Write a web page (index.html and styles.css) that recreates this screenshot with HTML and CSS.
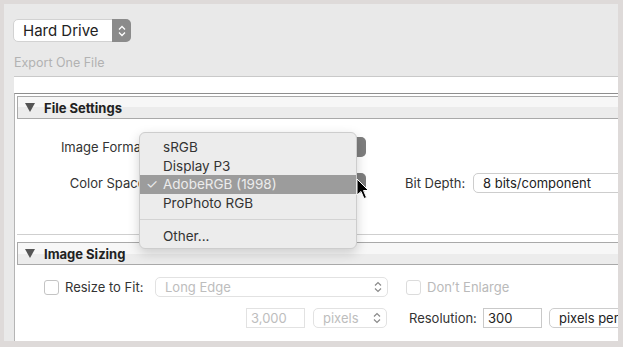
FILE: index.html
```html
<!DOCTYPE html>
<html lang="en">
<head>
    <meta charset="UTF-8">
    <meta name="viewport" content="width=device-width, initial-scale=1.0">
    <title>Export</title>
    <link rel="stylesheet" href="styles.css">
</head>
<body>

<div class="window">
    <div class="top">
        <div class="popup-main">
            <span class="popup-text">Hard Drive</span>
            <span class="stepper-dark">
                <svg width="10" height="14" viewBox="0 0 10 14"><path d="M2 5.5 L5 2.5 L8 5.5 M2 8.5 L5 11.5 L8 8.5" fill="none" stroke="#fff" stroke-width="1.3"/></svg>
            </span>
        </div>
        <div class="export-label">Export One File</div>
    </div>

    <div class="files-bar"></div>

    <div class="panel">
        <div class="section-head">
            <svg class="tri" width="10" height="9" viewBox="0 0 10 9"><polygon points="0,0 10,0 5,9" fill="#555"/></svg>
            <span>File Settings</span>
        </div>
        <div class="section-body file-body">
            <div class="row">
                <label class="field-label">Image Format:</label>
                <div class="popup"><span class="stepper-dark small"></span></div>
            </div>
            <div class="row row-gap">
                <label class="field-label">Color Space:</label>
                <div class="popup"><span class="stepper-dark small"></span></div>
                <label class="depth-label">Bit Depth:</label>
                <div class="select depth-select">8 bits/component</div>
            </div>
        </div>

        <div class="section-head second">
            <svg class="tri" width="10" height="9" viewBox="0 0 10 9"><polygon points="0,0 10,0 5,9" fill="#555"/></svg>
            <span>Image Sizing</span>
        </div>
        <div class="section-body sizing-body">
            <div class="row">
                <div class="check-group">
                    <span class="checkbox"></span>
                    <span class="check-text">Resize to Fit:</span>
                </div>
                <div class="select disabled long-edge">
                    Long Edge
                    <svg class="arrows" width="10" height="14" viewBox="0 0 10 14"><path d="M2 5.5 L5 2.5 L8 5.5 M2 8.5 L5 11.5 L8 8.5" fill="none" stroke="#8a8a8a" stroke-width="1.2"/></svg>
                </div>
                <span class="checkbox enlarge-box"></span>
                <span class="check-text disabled-text">Don’t Enlarge</span>
            </div>
            <div class="row row-two">
                <div class="input disabled size-input">3,000</div>
                <div class="select disabled units">
                    pixels
                    <svg class="arrows" width="10" height="14" viewBox="0 0 10 14"><path d="M2 5.5 L5 2.5 L8 5.5 M2 8.5 L5 11.5 L8 8.5" fill="none" stroke="#8a8a8a" stroke-width="1.2"/></svg>
                </div>
                <label class="res-label">Resolution:</label>
                <div class="input res-input">300</div>
                <div class="select res-units">pixels per inch</div>
            </div>
        </div>
    </div>

    <!-- open colour space menu -->
    <div class="menu">
        <div class="menu-item">sRGB</div>
        <div class="menu-item">Display P3</div>
        <div class="menu-item selected"><span class="check">✓</span>AdobeRGB (1998)</div>
        <div class="menu-item">ProPhoto RGB</div>
        <div class="menu-sep"></div>
        <div class="menu-item">Other...</div>
    </div>

    <svg class="cursor" width="14" height="22" viewBox="0 0 14 22">
        <path d="M1 1 L1 17 L5 13.5 L8 20.5 L10.5 19.5 L7.5 12.5 L12.5 12.5 Z" fill="#000" stroke="#fff" stroke-width="1"/>
    </svg>
</div>

</body>
</html>
```

FILE: styles.css
```css
body {
    margin: 0;
    background-color: #dedad9;
    font-family: Inter, "Helvetica Neue", Arial, sans-serif;
    font-size: 13px;
    color: #333;
}
.window {
    position: relative;
    margin: 4px 0 0 4px;
    width: 614px;
    height: 337px;
    background-color: #e9e9e9;
    overflow: hidden;
}
.top {
    padding: 15px 0 0 9px;
}
.popup-main {
    display: flex;
    align-items: stretch;
    width: 118px;
    height: 23px;
    box-sizing: border-box;
    background-color: #fff;
    border: 1px solid #d2d2d2;
    border-radius: 5px;
}
.popup-text {
    flex: 1;
    padding-left: 9px;
    font-size: 15px;
    line-height: 21px;
    color: #222;
}
.stepper-dark {
    display: flex;
    align-items: center;
    justify-content: center;
    width: 19px;
    margin: -1px -1px -1px 0;
    background-color: #8b8b8b;
    border-radius: 0 5px 5px 0;
}
.export-label {
    margin: 13px 0 0 1px;
    font-size: 12.5px;
    line-height: 15px;
    color: #b2b2b2;
}
.files-bar {
    height: 16px;
    margin: 6px 0 0 10px;
    background-color: #fff;
    border-top: 1px solid #c9c9c9;
}
.panel {
    margin-left: 10px;
    height: 250px;
    padding: 2px 0 0 2px;
    background-color: #fff;
    border-top: 1px solid #8e8e8e;
    border-left: 1px solid #b5b5b5;
}
.section-head {
    display: flex;
    align-items: center;
    height: 21px;
    padding-left: 7px;
    border: 1px solid #a9a9a9;
    border-right: none;
    background: linear-gradient(#f7f7f7 50%, #ececec 50%);
    font-weight: bold;
    font-size: 13px;
    color: #222;
}
.section-head .tri {
    margin-right: 9px;
}
.section-head.second {
    margin-top: 7px;
}
.section-body {
    padding-top: 18px;
}
.file-body {
    height: 97px;
    border-bottom: 1px solid #cfcfcf;
}
.row {
    display: flex;
    align-items: center;
    height: 20px;
}
.row > * {
    flex-shrink: 0;
    white-space: nowrap;
}
.row-gap {
    margin-top: 16px;
}
.field-label {
    width: 132px;
    text-align: right;
    color: #333;
}
.popup {
    display: flex;
    justify-content: flex-end;
    width: 209px;
    height: 18px;
    margin-left: 6px;
    background-color: #fff;
    border: 1px solid #cfcfcf;
    border-radius: 5px;
}
.stepper-dark.small {
    width: 17px;
    background-color: #7e7e7e;
}
.depth-label {
    width: 61px;
    margin-left: 39px;
}
.select {
    position: relative;
    height: 20px;
    box-sizing: border-box;
    padding-left: 9px;
    line-height: 18px;
    background-color: #fff;
    border: 1px solid #cdcdcd;
    border-radius: 5px;
    color: #222;
}
.depth-select {
    width: 160px;
    margin-left: 7px;
}
.select .arrows {
    position: absolute;
    right: 4px;
    top: 2px;
}
.select.disabled {
    border-color: #e2e2e2;
    color: #bdbdbd;
}
.sizing-body {
    padding-top: 12px;
}
.check-group {
    display: flex;
    align-items: center;
    width: 111px;
    margin-left: 27px;
}
.checkbox {
    width: 13px;
    height: 13px;
    border: 1px solid #c4c4c4;
    border-radius: 3px;
    background-color: #fff;
}
.check-text {
    margin-left: 6px;
    color: #333;
}
.long-edge {
    width: 233px;
}
.enlarge-box {
    margin-left: 18px;
    border-color: #dcdcdc;
}
.disabled-text {
    color: #bababa;
}
.row-two {
    margin-top: 11px;
}
.input {
    height: 20px;
    box-sizing: border-box;
    padding-left: 4px;
    line-height: 18px;
    background-color: #fff;
    border: 1px solid #c9c9c9;
    color: #222;
}
.input.disabled {
    border-color: #e2e2e2;
    color: #bdbdbd;
}
.size-input {
    width: 59px;
    margin-left: 229px;
}
.units {
    width: 74px;
    margin-left: 8px;
}
.res-label {
    width: 69px;
    margin-left: 22px;
}
.res-input {
    width: 59px;
    margin-left: 5px;
}
.res-units {
    width: 110px;
    margin-left: 7px;
}
.menu {
    position: absolute;
    left: 135px;
    top: 128px;
    width: 218px;
    height: 117px;
    box-sizing: border-box;
    padding-top: 5px;
    background-color: #ececec;
    border: 1px solid #cdcdcd;
    border-radius: 6px;
    box-shadow: 0 4px 12px rgba(0, 0, 0, 0.18);
    font-size: 13.5px;
}
.menu-item {
    position: relative;
    height: 18.5px;
    line-height: 18.5px;
    padding-left: 23px;
    color: #333;
}
.menu-item.selected {
    background-color: #9c9c9c;
    color: #ececec;
}
.menu-item .check {
    position: absolute;
    left: 6px;
}
.menu-sep {
    height: 1px;
    margin: 7px 0 7px;
    background-color: #d3d3d3;
}
.cursor {
    position: absolute;
    left: 352px;
    top: 174px;
}
```
